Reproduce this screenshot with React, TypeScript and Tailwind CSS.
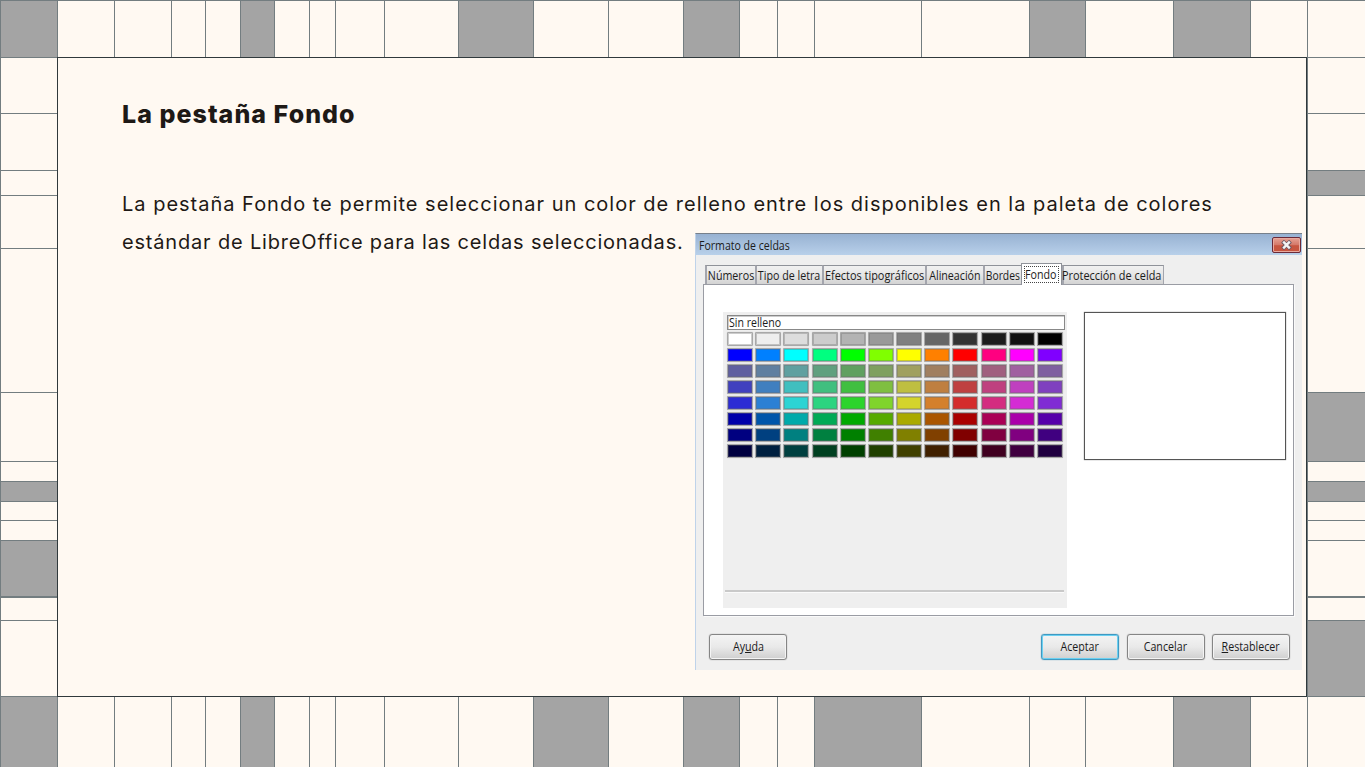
import React from "react";

type Cell = { size: number; filled?: boolean; thick?: boolean };

function strip(edges: number[], filled: number[], thick: number[] = []): Cell[] {
  return edges.slice(0, -1).map((edge, i) => ({
    size: edges[i + 1] - edge,
    filled: filled.includes(edge),
    thick: thick.includes(edge),
  }));
}

const columns = [0, 57, 114, 171, 205, 240, 274, 309, 335, 384, 458, 533, 608, 683, 739, 777, 814, 921, 1029, 1085, 1173, 1250, 1307, 1365];
const rows = [57, 113, 170, 195, 248, 392, 461, 481, 501, 520, 540, 596, 620, 696];

const topCells = strip(columns, [0, 240, 458, 683, 1029, 1173]);
const bottomCells = strip(columns, [0, 240, 533, 683, 814, 1173]);
const leftCells = strip(rows, [481, 540], [596]);
const rightCells = strip(rows, [170, 392, 481, 620], [596]);

function HorizontalStrip({ cells, className }: { cells: Cell[]; className: string }) {
  return (
    <div className={`flex shrink-0 ${className}`}>
      {cells.map((c, i) => (
        <div
          key={i}
          className={`shrink-0 border-l border-[#737d80] ${c.filled ? "bg-[#a4a4a4]" : ""}`}
          style={{ width: c.size }}
        />
      ))}
    </div>
  );
}

function VerticalStrip({ cells, className }: { cells: Cell[]; className: string }) {
  return (
    <div className={`flex shrink-0 flex-col border-b border-l border-[#737d80] ${className}`}>
      {cells.map((c, i) => (
        <div
          key={i}
          className={`shrink-0 border-[#737d80] ${c.thick ? "border-t-2" : "border-t"} ${c.filled ? "bg-[#a4a4a4]" : ""}`}
          style={{ height: c.size }}
        />
      ))}
    </div>
  );
}

const grays = ["#ffffff", "#eeeeee", "#dddddd", "#cccccc", "#b3b3b3", "#999999", "#808080", "#666666", "#333333", "#1c1c1c", "#111111", "#000000"];
/* Each hue is a triple of low / middle / high channel levels. */
const hues = ["LLH", "LMH", "LHH", "LHM", "LHL", "MHL", "HHL", "HML", "HLL", "HLM", "HLH", "MLH"];
const shades: [number, number, number][] = [
  [0, 128, 255],
  [96, 127, 160],
  [64, 127, 191],
  [44, 128, 212],
  [0, 85, 170],
  [0, 64, 128],
  [0, 32, 64],
];
const swatches = [
  ...grays,
  ...shades.flatMap(([low, mid, high]) =>
    hues.map((h) => `rgb(${[...h].map((c) => (c === "L" ? low : c === "M" ? mid : high)).join(",")})`)
  ),
];

function Tab({ label, className, textClass = "scale-x-[0.89]" }: { label: string; className: string; textClass?: string }) {
  return (
    <div
      className={`flex h-[19px] shrink-0 items-center justify-center whitespace-nowrap border-l-2 border-t border-l-[#a3a5ad] border-t-[#8f9299] bg-linear-to-b from-[#f1f1f1] via-[#e6e6e6] to-[#d3d3d3] pt-px ${className}`}
    >
      <span className={`block shrink-0 ${textClass}`}>{label}</span>
    </div>
  );
}

function DialogButton({ children, className = "border-[#858585]" }: { children: React.ReactNode; className?: string }) {
  return (
    <button
      className={`flex h-[26px] w-[78px] shrink-0 items-center justify-center rounded-[3px] border bg-linear-to-b from-[#f4f4f4] from-0% via-[#e9e9e9] via-50% to-[#cfcfcf] to-100% ${className}`}
    >
      <span className="block shrink-0 scale-x-[0.89]">{children}</span>
    </button>
  );
}

function FormatDialog() {
  return (
    <div className="flex h-[437px] w-[607px] flex-col border-l border-t border-l-[#bfd3ea] border-t-[#77808b] bg-[#efefef] font-['Open_Sans','Noto_Sans',sans-serif] text-[12px] leading-[14px] text-[#1b1b1b]">
      <div className="flex h-[21px] shrink-0 justify-between bg-linear-to-b from-[#98b2d2] to-[#b8d0ea] pl-[3px]">
        <span className="block origin-left scale-x-[0.88] pt-[5px]">Formato de celdas</span>
        <div className="mr-px mt-[3px] flex h-4 w-[29px] items-center justify-center rounded-[2px] border border-[#6b2a38] bg-linear-to-b from-[#e6a194] from-0% via-[#d5796a] via-48% to-[#c75540] to-55% shadow-[inset_0_0_0_1px_#e8a99e]">
          <svg width="13" height="10" viewBox="0 0 13 10">
            <path d="M2.5 1.2 10.5 8.8M10.5 1.2 2.5 8.8" stroke="#6b5a65" strokeWidth="4" />
            <path d="M3.2 1.7 9.8 8.3M9.8 1.7 3.2 8.3" stroke="#f4f4f4" strokeWidth="2.4" />
          </svg>
        </div>
      </div>

      <div className="flex h-[29px] shrink-0 items-end pl-[9px]">
        <Tab label="Números" className="w-[50px]" />
        <Tab label="Tipo de letra" className="w-[67px]" />
        <Tab label="Efectos tipográficos" className="w-[103px]" textClass="scale-x-[0.91]" />
        <Tab label="Alineación" className="w-[58px]" />
        <Tab label="Bordes" className="w-[38px]" textClass="scale-x-[0.86]" />
        <div className="z-10 -mb-px flex h-[22px] w-[41px] shrink-0 items-center justify-center border-x border-t border-[#8f9299] bg-white">
          <div className="mr-px flex h-[17px] w-[35px] items-center justify-center border border-dotted border-[#444]">
            <span className="block shrink-0 scale-x-[0.89]">Fondo</span>
          </div>
        </div>
        <Tab label="Protección de celda" className="w-[102px] border-r border-l-0 border-r-[#a3a5ad] pr-1" textClass="scale-x-[0.91]" />
      </div>

      <div className="ml-[7px] flex h-[332px] w-[591px] shrink-0 border border-[#9a9ca4] bg-white pl-[19px] pt-[27px] shadow-[1px_1px_0_#fafafa]">
        <div className="h-[296px] w-[344px] shrink-0 bg-[#efefef] pl-1 pt-[3px]">
          <div className="flex h-[15px] w-[338px] items-center border border-[#888] bg-white pl-px shadow-[inset_1px_1px_0_#ccc]">
            <span className="block origin-left scale-x-[0.88] pt-px">Sin relleno</span>
          </div>
          <div className="mt-[2px] grid w-[338px] grid-cols-[repeat(12,28.18px)] grid-rows-[repeat(8,16px)]">
            {swatches.map((color, i) => (
              <div key={i} className="h-[14px] w-[26px] rounded-[1px] border border-[#a8a8a8] shadow-[inset_0_0_0_1px_rgba(110,110,110,0.35),0_0_1px_#bbb]" style={{ backgroundColor: color }} />
            ))}
          </div>
          <div className="ml-[-2px] mt-[130px] h-[3px] w-[339px] border-b border-t-2 border-b-[#fafafa] border-t-[#c9c9c9]" />
        </div>
        <div className="ml-[17px] h-[148px] w-[202px] shrink-0 border border-[#555] bg-white shadow-[0_0_1px_#777]" />
      </div>

      <div className="flex items-center pl-[13px] pt-[18px]">
        <DialogButton className="border-[#858585] shadow-[inset_0_0_0_1px_#f4f4f4,0_0_1px_#777]">Ay<u>u</u>da</DialogButton>
        <div className="ml-auto mr-[12px] flex gap-[7.5px]">
          <DialogButton className="border-[#3f99c2] shadow-[inset_0_0_0_1px_#6bd0f1,0_0_1px_#267ba2]">Aceptar</DialogButton>
          <DialogButton className="border-[#858585] shadow-[inset_0_0_0_1px_#f4f4f4,0_0_1px_#777]">Cancelar</DialogButton>
          <DialogButton className="border-[#858585] shadow-[inset_0_0_0_1px_#f4f4f4,0_0_1px_#777]"><u>R</u>establecer</DialogButton>
        </div>
      </div>
    </div>
  );
}

export default function App() {
  return (
    <div className="flex h-[767px] w-[1365px] flex-col overflow-hidden bg-[#fff9f2]">
      <HorizontalStrip cells={topCells} className="h-[57px] border-t border-[#737d80]" />
      <div className="flex h-[640px] shrink-0">
        <VerticalStrip cells={leftCells} className="w-[57px]" />
        <main className="flex w-[1250px] shrink-0 flex-col border border-[#30393c] font-['Inter',sans-serif] text-[#1e1916]">
          <h1 className="ml-[64px] mt-[36px] h-10 whitespace-nowrap text-[25px] font-extrabold leading-10 tracking-[1.05px]">La pestaña Fondo</h1>
          <p className="ml-[64px] mt-[51px] h-[76px] whitespace-nowrap text-[20px] leading-[38px]">
            <span className="block tracking-[0.995px]">La pestaña Fondo te permite seleccionar un color de relleno entre los disponibles en la paleta de colores</span>
            <span className="block tracking-[0.82px]">estándar de LibreOffice para las celdas seleccionadas.</span>
          </p>
          <div className="-mt-[28px] ml-auto mr-[4px]">
            <FormatDialog />
          </div>
        </main>
        <VerticalStrip cells={rightCells} className="w-[58px]" />
      </div>
      <HorizontalStrip cells={bottomCells} className="h-[70px]" />
    </div>
  );
}
